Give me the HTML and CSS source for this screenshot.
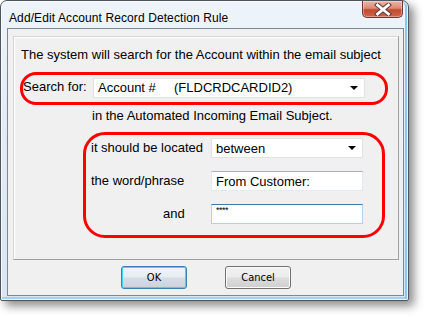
FILE: index.html
```html
<!DOCTYPE html>
<html>
<head>
<meta charset="utf-8">
<link rel="stylesheet" href="styles.css">
</head>
<body>
<div class="window">
  <div class="titlebar">
    <span class="title">Add/Edit Account Record Detection Rule</span>
    <div class="close">
      <svg width="22" height="13" viewBox="0 0 22 13">
        <path d="M5.5 2 L16.5 11 M16.5 2 L5.5 11" stroke="#5a3a36" stroke-width="4.8" stroke-linecap="square"/>
        <path d="M5.5 2 L16.5 11 M16.5 2 L5.5 11" stroke="#ffffff" stroke-width="2.8" stroke-linecap="square"/>
      </svg>
    </div>
  </div>
  <div class="client">
    <div class="panel">
      <p class="intro">The system will search for the Account within the email subject</p>
      <div class="oval oval-search">
        <span class="search-label">Search for:</span>
        <div class="field combo combo-wide">
          <span class="acct">Account #</span><span>(FLDCRDCARDID2)</span>
          <span class="arrow"></span>
        </div>
      </div>
      <p class="sub">in the Automated Incoming Email Subject.</p>
      <div class="oval oval-rule">
        <span class="rlabel">it should be located</span>
        <div class="field combo"><span>between</span><span class="arrow"></span></div>
        <span class="rlabel">the word/phrase</span>
        <div class="field text">From Customer:</div>
        <span class="rlabel and">and</span>
        <div class="field text focused"><span class="stars">****</span></div>
      </div>
    </div>
    <div class="buttons">
      <button class="btn default">OK</button>
      <button class="btn">Cancel</button>
    </div>
  </div>
</div>
</body>
</html>
```
FILE: styles.css
```css
html, body {
  margin: 0;
  padding: 0;
  background: #ffffff;
}
body {
  width: 426px;
  height: 317px;
  overflow: hidden;
  font-family: "Liberation Sans", Arial, sans-serif;
}
.window {
  width: 409px;
  height: 301px;
  box-sizing: border-box;
  border: 1px solid #4a5560;
  border-radius: 7px 7px 2px 2px;
  background: linear-gradient(180deg, #eef4fa 0%, #e2ecf5 40%, #d9e6f2 100%);
  box-shadow: 5px 5px 10px rgba(0, 0, 0, 0.45), inset 0 0 0 1px rgba(255,255,255,0.8), inset -3px 0 0 #8cc8ee, inset 0 -3px 0 #9fd2f2;
  display: flex;
  flex-direction: column;
  padding: 0 4px 4px 6px;
}
.titlebar {
  height: 27px;
  display: flex;
  align-items: flex-start;
  justify-content: space-between;
}
.title {
  font-size: 12px;
  color: #000;
  margin: 10px 0 0 2px;
  line-height: 14px;
  letter-spacing: 0.1px;
}
.close {
  width: 41px;
  height: 17px;
  box-sizing: border-box;
  margin-right: 1px;
  border: 1px solid #6b3a33;
  border-top: none;
  border-radius: 0 0 5px 5px;
  background: linear-gradient(180deg, #eab7a9 0%, #dc8a74 45%, #c24a30 55%, #d0654a 100%);
  display: flex;
  align-items: center;
  justify-content: center;
  box-shadow: inset 0 0 0 1px rgba(255,255,255,0.35);
}
.close svg { display: block; }
.client {
  flex: 1;
  background: #f0f0f0;
  border: 1px solid #7c8894;
  display: flex;
  flex-direction: column;
  padding: 7px 4px 0 5px;
}
.panel {
  height: 224px;
  box-sizing: border-box;
  border: 1px solid #a0a0a0;
  border-top-color: #d4d4d4;
  border-left-color: #d4d4d4;
  box-shadow: inset 1px 1px 0 #ffffff;
  padding: 10px 0 0 6px;
  font-size: 13px;
  color: #000;
}
.intro {
  margin: 0 0 0 1px;
  line-height: 16px;
}
.oval {
  border: 3px solid #ff0000;
  box-sizing: border-box;
}
.oval-search {
  width: 368px;
  height: 33px;
  margin-top: 9px;
  border-radius: 16px;
  display: flex;
  align-items: center;
  padding-left: 0;
}
.search-label {
  width: 70px;
  flex: none;
  position: relative;
  top: -2px;
}
.field {
  background: #fff;
  box-sizing: border-box;
  height: 20px;
  display: flex;
  align-items: center;
  padding-left: 4px;
  font-size: 13px;
}
.combo {
  border: 1px solid #e2e2e2;
  position: relative;
}
.combo-wide {
  width: 272px;
  position: relative;
  top: -1px;
}
.acct {
  width: 76px;
}
.arrow {
  position: absolute;
  right: 6px;
  top: 7px;
  width: 0;
  height: 0;
  border-left: 4px solid transparent;
  border-right: 4px solid transparent;
  border-top: 4px solid #000;
}
.sub {
  margin: 3px 0 0 72px;
  line-height: 16px;
}
.oval-rule {
  width: 302px;
  height: 106px;
  margin: 8px 0 0 63px;
  border-radius: 22px;
  display: grid;
  grid-template-columns: 120px 152px;
  grid-template-rows: 20px 20px 20px;
  row-gap: 13px;
  align-items: center;
  padding: 3px 0 0 5px;
}
.rlabel {
  line-height: 16px;
}
.rlabel.and {
  padding-left: 72px;
}
.text {
  border: 1px solid #e3e9ef;
  border-top-color: #abadb3;
  padding-left: 4px;
}
.focused {
  border-color: #b5cfe7;
  border-top-color: #3d7bad;
  align-items: flex-start;
}
.stars {
  font-size: 9px;
  line-height: 9px;
  letter-spacing: -0.5px;
  margin-top: 1px;
}
.buttons {
  display: flex;
  gap: 38px;
  padding: 6px 0 0 108px;
}
.btn {
  width: 66px;
  height: 23px;
  box-sizing: border-box;
  border: 1px solid #707070;
  border-radius: 3px;
  background: linear-gradient(180deg, #f2f2f2 0%, #ebebeb 48%, #dddddd 52%, #cfcfcf 100%);
  box-shadow: inset 0 0 0 1px #fbfbfb;
  font-family: "DejaVu Sans Condensed", "Liberation Sans", sans-serif;
  font-size: 11px;
  color: #000;
  padding: 0;
}
.btn.default {
  border-color: #3c7fb1;
  box-shadow: inset 0 0 0 1px #48d0f8;
  background: linear-gradient(180deg, #f0f4f7 0%, #e6ecf0 48%, #d5dee4 52%, #c8d3da 100%);
}
```
